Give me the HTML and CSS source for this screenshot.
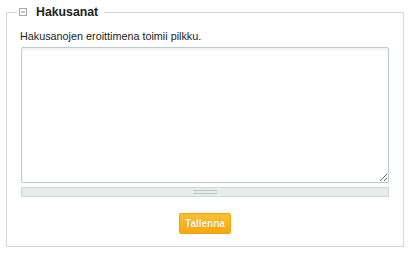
FILE: index.html
```html
<!DOCTYPE html>
<html lang="fi">
<head>
  <meta charset="UTF-8">
  <title>Hakusanat</title>
  <link rel="stylesheet" href="styles.css">
</head>
<body>
  <fieldset class="panel">
    <legend class="panel-title">
      <svg class="toggle" width="8" height="8" viewBox="0 0 8 8">
        <rect x="0.5" y="0.5" width="7" height="7" fill="#fff" stroke="#a8a8a8"/>
        <line x1="2" y1="4" x2="6" y2="4" stroke="#8a8a8a"/>
      </svg>
      <span>Hakusanat</span>
    </legend>
    <p class="hint">Hakusanojen eroittimena toimii pilkku.</p>
    <textarea class="keywords"></textarea>
    <div class="grip"><span></span></div>
    <div class="actions">
      <button class="btn-save">Tallenna</button>
    </div>
  </fieldset>
</body>
</html>
```

FILE: styles.css
```css
* {
  box-sizing: border-box;
}

body {
  margin: 0;
  background-color: #fff;
  color: #222;
  font-family: "Liberation Sans", Arial, sans-serif;
}

.panel {
  margin: 4px 9px 0 6px;
  padding: 0 13px 12px 13px;
  border: 1px solid #d6d6d6;
  min-width: 0;
}

.panel-title {
  margin-left: -3px;
  padding: 0 6px 0 2px;
  font-size: 12.3px;
  font-weight: bold;
  line-height: 16px;
  color: #222;
  display: flex;
  align-items: center;
}

.toggle {
  display: block;
  margin-right: 9px;
}

.hint {
  margin: 9px 0 4px 0;
  font-size: 10.8px;
  line-height: 14px;
}

.keywords {
  display: block;
  width: 368px;
  height: 136px;
  margin: 0 0 0 1px;
  border: 1px solid #bfcbca;
  border-radius: 2px;
  box-shadow: inset 0 2px 3px rgba(0, 0, 0, 0.06);
  resize: vertical;
  font-family: "Liberation Sans", Arial, sans-serif;
  font-size: 11px;
}

.grip {
  width: 368px;
  height: 10px;
  margin: 4px 0 0 1px;
  background-color: #e6ebec;
  border: 1px solid #d0d9d9;
  display: flex;
  justify-content: center;
  align-items: center;
}

.grip span {
  display: block;
  width: 24px;
  height: 4px;
  border-top: 1px solid #b9c7c7;
  border-bottom: 1px solid #b9c7c7;
}

.actions {
  display: flex;
  justify-content: center;
  margin-top: 16px;
}

.btn-save {
  width: 52px;
  height: 21px;
  padding: 0;
  border: 1px solid #f0a30a;
  border-radius: 2px;
  background: linear-gradient(#fdc031, #f7a80e);
  color: #fff;
  font-family: "Liberation Sans", Arial, sans-serif;
  font-size: 10px;
  font-weight: bold;
  text-shadow: 0 0 1px rgba(150, 90, 0, 0.6);
  cursor: pointer;
}
```
